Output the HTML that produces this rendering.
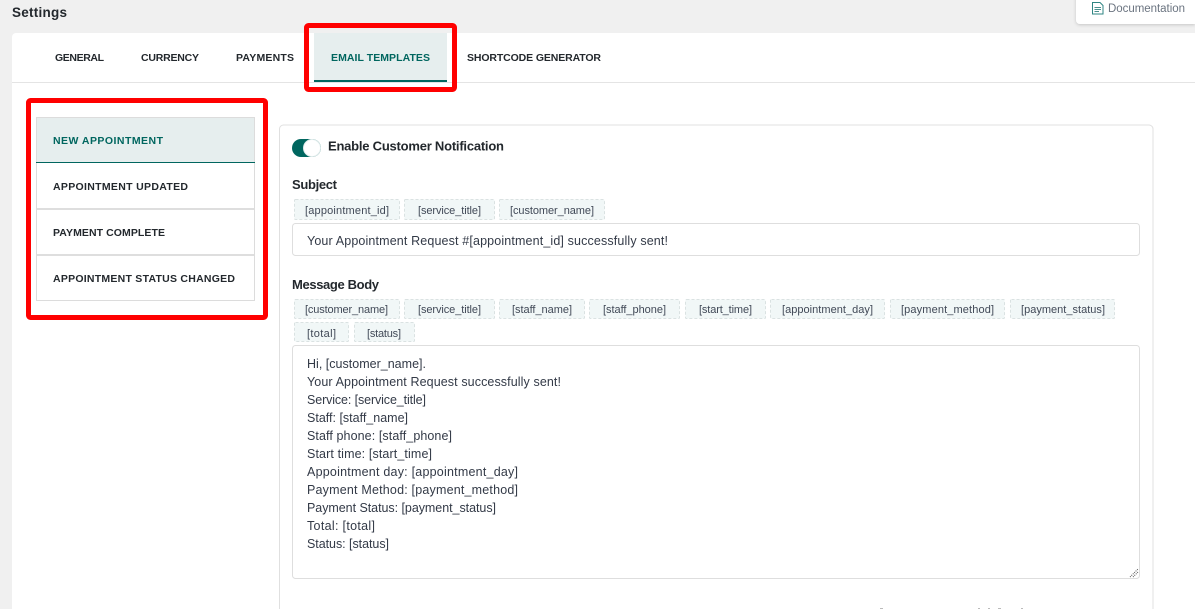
<!DOCTYPE html>
<html lang="en">
<head>
<meta charset="utf-8">
<title>Settings</title>
<style>
html,body{margin:0;padding:0;width:1195px;height:609px;overflow:hidden;background:#f0f0f0}
svg{display:block}
text{font-family:"Liberation Sans",sans-serif;fill:#333a47;font-size:12.500px}
.b{font-weight:700;fill:#23282d;font-size:13px}
.t{font-size:10.500px;font-weight:700;fill:#23282d}
.a{fill:#00665f}
.c{font-size:11px;fill:#414957}
.chip{fill:#f1f7f7;stroke:#dae2e2;stroke-dasharray:3 2}
.box{fill:#fff;stroke:#dedede}
.red{fill:none;stroke:#f00;stroke-width:5}
</style>
</head>
<body>
<svg width="1195" height="609" viewBox="0 0 1195 609" xmlns="http://www.w3.org/2000/svg">
<defs>
<filter id="s" x="-10%" y="-30%" width="120%" height="170%"><feDropShadow dx="0" dy="1" stdDeviation="1.5" flood-color="#000" flood-opacity=".18"/></filter>
</defs>
<rect width="1195" height="609" fill="#f0f0f0"/>
<text x="12" y="17" class="b" style="font-size:13.500px" textLength="55">Settings</text>

<path d="M1076 -5H1195V24H1080a4 4 0 0 1-4-4Z" fill="#fff" filter="url(#s)"/>
<path d="M1092.500 2.500H1100L1103 5.500V14H1092.500Z" fill="#fff" stroke="#2f8583"/>
<path d="M1094.500 7.500H1101M1094.500 9.500H1101M1094.500 11.500H1099" stroke="#4b8f8d"/>
<text x="1108" y="12" textLength="77" style="font-size:11.500px;fill:#6b7480">Documentation</text>

<path d="M12 609V37a4 4 0 0 1 4-4H1195V609Z" fill="#fff"/>
<rect x="12" y="82" width="1183" height="1" fill="#e4e4e4"/>

<rect x="314" y="33" width="133" height="48" fill="#e6eeee"/>
<rect x="314" y="80" width="133" height="2" fill="#00665f"/>
<text x="55" y="61" class="t" textLength="49">GENERAL</text>
<text x="141" y="61" class="t" textLength="58">CURRENCY</text>
<text x="236" y="61" class="t" textLength="58">PAYMENTS</text>
<text x="331" y="61" class="t a" textLength="99">EMAIL TEMPLATES</text>
<text x="467" y="61" class="t" textLength="134">SHORTCODE GENERATOR</text>
<rect x="306.500" y="25.500" width="148" height="64" rx="2" class="red"/>

<rect x="36.500" y="117.500" width="218" height="183" fill="#fff" stroke="#dcdcdc"/>
<rect x="37" y="118" width="217" height="44" fill="#e6eeee"/>
<rect x="36" y="162" width="219" height="1" fill="#00665f"/>
<rect x="37" y="208" width="217" height="2" fill="#dedede"/>
<rect x="37" y="254" width="217" height="2" fill="#dedede"/>
<text x="53" y="144" class="t a" textLength="110">NEW APPOINTMENT</text>
<text x="53" y="190" class="t" textLength="135">APPOINTMENT UPDATED</text>
<text x="53" y="236" class="t" textLength="112">PAYMENT COMPLETE</text>
<text x="53" y="282" class="t" textLength="182">APPOINTMENT STATUS CHANGED</text>
<rect x="28.500" y="100.500" width="237" height="217" rx="2" class="red"/>

<path d="M279.500 620V129a4 4 0 0 1 4-4H1149a4 4 0 0 1 4 4V620" fill="#fff" stroke="#e0e0e0"/>
<rect x="292" y="139" width="29" height="18" rx="9" fill="#00665f"/>
<circle cx="312" cy="148" r="8.500" fill="#fff" stroke="#e4eeee"/>
<text x="328" y="150.500" class="b" textLength="176">Enable Customer Notification</text>
<text x="292" y="189" class="b" textLength="45">Subject</text>

<rect x="294.500" y="199.500" width="105" height="20" rx="1" class="chip"/>
<rect x="404.500" y="199.500" width="90" height="20" rx="1" class="chip"/>
<rect x="499.500" y="199.500" width="105" height="20" rx="1" class="chip"/>
<text x="305" y="214" class="c" textLength="84">[appointment_id]</text>
<text x="418" y="214" class="c" textLength="63">[service_title]</text>
<text x="510" y="214" class="c" textLength="84">[customer_name]</text>

<rect x="292.500" y="223.500" width="847" height="32" rx="3" class="box"/>
<text x="307" y="245" textLength="361">Your Appointment Request #[appointment_id] successfully sent!</text>

<text x="292" y="289" class="b" textLength="87">Message Body</text>

<rect x="294.500" y="299.500" width="105" height="19" rx="1" class="chip"/>
<rect x="404.500" y="299.500" width="90" height="19" rx="1" class="chip"/>
<rect x="499.500" y="299.500" width="85" height="19" rx="1" class="chip"/>
<rect x="589.500" y="299.500" width="90" height="19" rx="1" class="chip"/>
<rect x="685.500" y="299.500" width="80" height="19" rx="1" class="chip"/>
<rect x="770.500" y="299.500" width="114" height="19" rx="1" class="chip"/>
<rect x="890.500" y="299.500" width="114" height="19" rx="1" class="chip"/>
<rect x="1010.500" y="299.500" width="104" height="19" rx="1" class="chip"/>
<rect x="294.500" y="322.500" width="54" height="19" rx="1" class="chip"/>
<rect x="354.500" y="322.500" width="60" height="19" rx="1" class="chip"/>
<text x="305" y="313" class="c" textLength="83">[customer_name]</text>
<text x="418" y="313" class="c" textLength="63">[service_title]</text>
<text x="512" y="313" class="c" textLength="60">[staff_name]</text>
<text x="603" y="313" class="c" textLength="63">[staff_phone]</text>
<text x="699" y="313" class="c" textLength="53">[start_time]</text>
<text x="782" y="313" class="c" textLength="91">[appointment_day]</text>
<text x="901" y="313" class="c" textLength="93">[payment_method]</text>
<text x="1021" y="313" class="c" textLength="84">[payment_status]</text>
<text x="307" y="337" class="c" textLength="29">[total]</text>
<text x="367" y="337" class="c" textLength="34">[status]</text>

<rect x="292.500" y="345.500" width="847" height="233" rx="3" class="box"/>
<text x="307" y="368" textLength="119">Hi, [customer_name].</text>
<text x="307" y="386" textLength="254">Your Appointment Request successfully sent!</text>
<text x="307" y="404" textLength="119">Service: [service_title]</text>
<text x="307" y="422" textLength="101">Staff: [staff_name]</text>
<text x="307" y="440" textLength="145">Staff phone: [staff_phone]</text>
<text x="307" y="458" textLength="125">Start time: [start_time]</text>
<text x="307" y="476" textLength="211">Appointment day: [appointment_day]</text>
<text x="307" y="494" textLength="211">Payment Method: [payment_method]</text>
<text x="307" y="512" textLength="189">Payment Status: [payment_status]</text>
<text x="307" y="530" textLength="68">Total: [total]</text>
<text x="307" y="548" textLength="82">Status: [status]</text>
<path d="M1130 577L1138 569M1133 577L1138 572" stroke="#555" stroke-width="1" stroke-dasharray="1 1"/>
<path d="M880 608.500H883M978 608.500H980M988 608.500H990M998 608.500H1001M1021 608.500H1023" stroke="#bbb"/>
</svg>
</body>
</html>
